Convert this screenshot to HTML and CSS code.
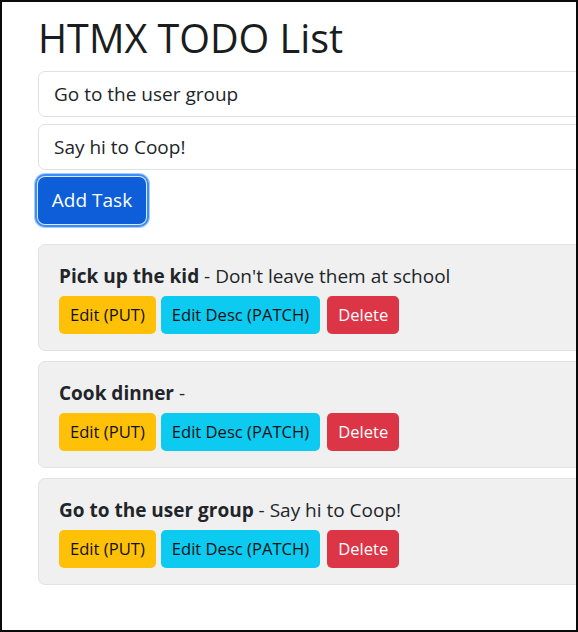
FILE: index.html
```html
<!DOCTYPE html>
<html lang="en">
<head>
<meta charset="utf-8">
<title>HTMX TODO List</title>
<link rel="stylesheet" href="styles.css">
</head>
<body>
<div class="frame">
  <div class="container">
    <h1 class="title">HTMX TODO List</h1>
    <form class="add-form">
      <input class="field" type="text" value="Go to the user group">
      <input class="field" type="text" value="Say hi to Coop!">
      <div class="form-actions">
        <button type="button" class="btn btn-primary">Add Task</button>
      </div>
    </form>
    <div class="task-list">
      <div class="task">
        <div class="task-text"><strong>Pick up the kid</strong> - Don't leave them at school</div>
        <div class="actions">
          <button type="button" class="btn btn-sm btn-warning">Edit (PUT)</button>
          <button type="button" class="btn btn-sm btn-info">Edit Desc (PATCH)</button>
          <button type="button" class="btn btn-sm btn-danger">Delete</button>
        </div>
      </div>
      <div class="task">
        <div class="task-text"><strong>Cook dinner</strong> - </div>
        <div class="actions">
          <button type="button" class="btn btn-sm btn-warning">Edit (PUT)</button>
          <button type="button" class="btn btn-sm btn-info">Edit Desc (PATCH)</button>
          <button type="button" class="btn btn-sm btn-danger">Delete</button>
        </div>
      </div>
      <div class="task">
        <div class="task-text"><strong>Go to the user group</strong> - Say hi to Coop!</div>
        <div class="actions">
          <button type="button" class="btn btn-sm btn-warning">Edit (PUT)</button>
          <button type="button" class="btn btn-sm btn-info">Edit Desc (PATCH)</button>
          <button type="button" class="btn btn-sm btn-danger">Delete</button>
        </div>
      </div>
    </div>
  </div>
</div>
</body>
</html>
```

FILE: styles.css
```css
* { box-sizing: border-box; }

html, body {
  margin: 0;
  padding: 0;
  background: #fff;
}

body {
  font-family: "Open Sans", "Noto Sans", sans-serif;
  color: #212529;
}

.frame {
  width: 578px;
  height: 632px;
  border: 2px solid #0a0a0a;
  overflow: hidden;
  background: #fff;
}

.container {
  width: 620px;
  padding-left: 36px;
}

.title {
  margin: 12px 0 0 0;
  font-size: 39.5px;
  line-height: 48px;
  font-weight: 500;
  color: #1a1d20;
}

.add-form {
  margin-top: 9px;
  display: flex;
  flex-direction: column;
  gap: 7px;
}

.field {
  display: block;
  width: 100%;
  height: 46px;
  padding: 0 15px;
  border: 1px solid #dfe2e5;
  border-radius: 7px;
  font-family: inherit;
  font-size: 19px;
  color: #212529;
  background: #fff;
  outline: none;
}

.form-actions {
  display: flex;
}

.btn {
  font-family: inherit;
  border: 1px solid transparent;
  cursor: pointer;
  line-height: 1.5;
}

.btn-primary {
  height: 47px;
  width: 108px;
  padding: 0;
  font-size: 19px;
  color: #fff;
  background: #0d5ed8;
  border-radius: 7px;
  box-shadow: 0 0 0 1px #dce9fc, 0 0 0 3px #3a8ef5, 0 0 0 4px #a9cbf9;
}

.task-list {
  margin-top: 20px;
  display: flex;
  flex-direction: column;
  gap: 10px;
}

.task {
  background: #f0f0f0;
  border: 1px solid #e3e3e3;
  border-radius: 7px;
  padding: 17px 20px 16px 20px;
}

.task-text {
  font-size: 19px;
  line-height: 29px;
}

.task-text strong {
  font-weight: 700;
}

.actions {
  margin-top: 5px;
  display: flex;
  gap: 5px;
}

.btn-sm {
  height: 38px;
  padding: 0 10px;
  font-size: 16.6px;
  border-radius: 5px;
}

.btn-warning {
  background: #ffc107;
  color: #111;
}

.btn-info {
  background: #0dcaf0;
  color: #111;
}

.btn-danger {
  background: #dc3545;
  color: #fff;
  margin-left: 2px;
}
```
